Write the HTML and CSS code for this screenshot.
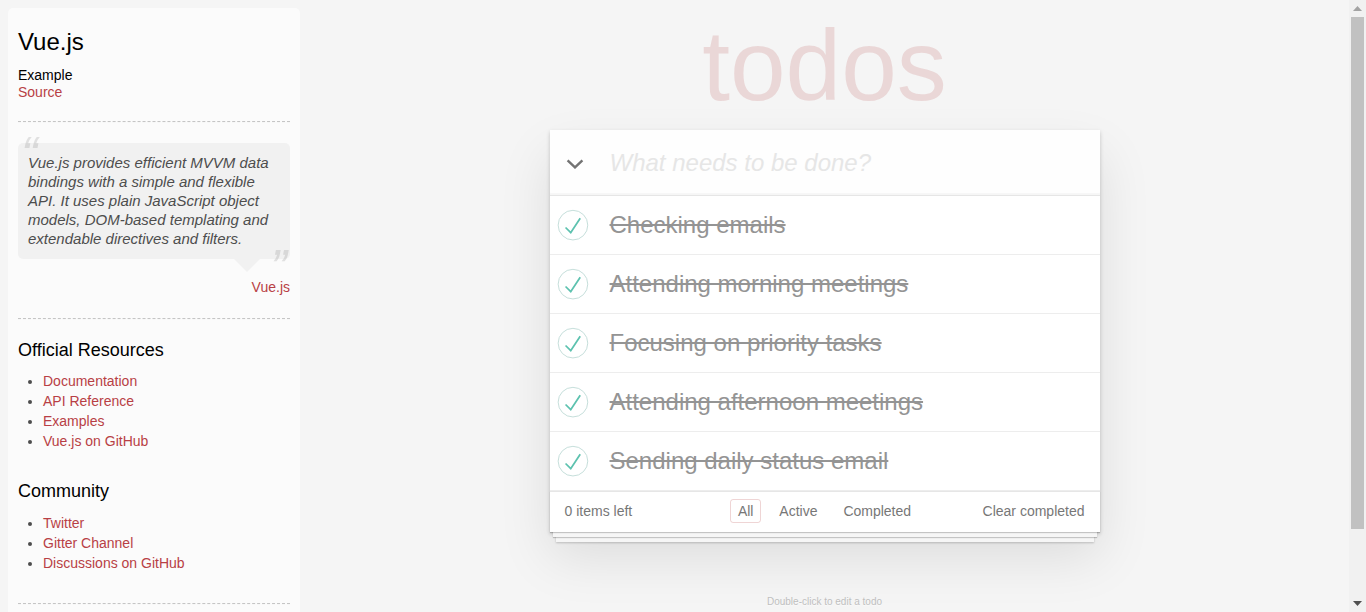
FILE: index.html
```html
<!DOCTYPE html>
<html lang="en">
<head>
<meta charset="utf-8">
<title>Vue.js • TodoMVC</title>
<link rel="stylesheet" href="styles.css">
</head>
<body>
<div class="page">
  <aside class="learn">
    <header class="learn-header">
      <h3 class="learn-title">Vue.js</h3>
      <h5 class="learn-sub">Example</h5>
      <a class="learn-link source-link" href="#">Source</a>
    </header>
    <hr class="rule">
    <blockquote class="quote">
      <div class="speech-bubble">
        <p class="quote-text">Vue.js provides efficient MVVM data bindings with a simple and flexible API. It uses plain JavaScript object models, DOM-based templating and extendable directives and filters.</p>
      </div>
      <footer class="quote-footer"><a class="learn-link" href="#">Vue.js</a></footer>
    </blockquote>
    <hr class="rule">
    <h4 class="learn-heading">Official Resources</h4>
    <ul class="learn-list">
      <li><a class="learn-link" href="#">Documentation</a></li>
      <li><a class="learn-link" href="#">API Reference</a></li>
      <li><a class="learn-link" href="#">Examples</a></li>
      <li><a class="learn-link" href="#">Vue.js on GitHub</a></li>
    </ul>
    <h4 class="learn-heading">Community</h4>
    <ul class="learn-list">
      <li><a class="learn-link" href="#">Twitter</a></li>
      <li><a class="learn-link" href="#">Gitter Channel</a></li>
      <li><a class="learn-link" href="#">Discussions on GitHub</a></li>
    </ul>
    <footer class="learn-footer">
      <hr class="rule">
      <em>If you have other helpful links to share, or find any of the links above no longer work, please <a class="learn-link" href="#">let us know</a>.</em>
    </footer>
  </aside>

  <main class="main-col">
    <h1 class="app-title">todos</h1>
    <section class="todoapp">
      <header class="app-header">
        <label class="toggle-all" for="new-todo">
          <svg class="chevron" width="18" height="10" viewBox="0 0 18 10"><path d="M1.6 1.4 L9 8.4 L16.4 1.4" fill="none" stroke="#737373" stroke-width="2.4"/></svg>
        </label>
        <input id="new-todo" class="new-todo" placeholder="What needs to be done?" autocomplete="off">
      </header>
      <ul class="todo-list">
        <li class="todo-item">
          <span class="toggle"><svg width="40" height="40" viewBox="-10 -18 100 135"><circle cx="50" cy="50" r="50" fill="none" stroke="#bddad5" stroke-width="3"/><path fill="#5dc2af" d="M72 25L42 71 27 56l-4 4 20 20 34-52z"/></svg></span>
          <label class="todo-label">Checking emails</label>
        </li>
        <li class="todo-item">
          <span class="toggle"><svg width="40" height="40" viewBox="-10 -18 100 135"><circle cx="50" cy="50" r="50" fill="none" stroke="#bddad5" stroke-width="3"/><path fill="#5dc2af" d="M72 25L42 71 27 56l-4 4 20 20 34-52z"/></svg></span>
          <label class="todo-label">Attending morning meetings</label>
        </li>
        <li class="todo-item">
          <span class="toggle"><svg width="40" height="40" viewBox="-10 -18 100 135"><circle cx="50" cy="50" r="50" fill="none" stroke="#bddad5" stroke-width="3"/><path fill="#5dc2af" d="M72 25L42 71 27 56l-4 4 20 20 34-52z"/></svg></span>
          <label class="todo-label">Focusing on priority tasks</label>
        </li>
        <li class="todo-item">
          <span class="toggle"><svg width="40" height="40" viewBox="-10 -18 100 135"><circle cx="50" cy="50" r="50" fill="none" stroke="#bddad5" stroke-width="3"/><path fill="#5dc2af" d="M72 25L42 71 27 56l-4 4 20 20 34-52z"/></svg></span>
          <label class="todo-label">Attending afternoon meetings</label>
        </li>
        <li class="todo-item">
          <span class="toggle"><svg width="40" height="40" viewBox="-10 -18 100 135"><circle cx="50" cy="50" r="50" fill="none" stroke="#bddad5" stroke-width="3"/><path fill="#5dc2af" d="M72 25L42 71 27 56l-4 4 20 20 34-52z"/></svg></span>
          <label class="todo-label">Sending daily status email</label>
        </li>
      </ul>
      <footer class="app-footer">
        <span class="todo-count"><strong>0</strong> items left</span>
        <ul class="filters">
          <li><a class="filter selected" href="#/all">All</a></li>
          <li><a class="filter" href="#/active">Active</a></li>
          <li><a class="filter" href="#/completed">Completed</a></li>
        </ul>
        <button class="clear-completed">Clear completed</button>
      </footer>
    </section>
    <footer class="info">
      <p>Double-click to edit a todo</p>
      <p>Written by <a href="#">Evan You</a></p>
      <p>Part of <a href="#">TodoMVC</a></p>
    </footer>
  </main>
</div>

<div class="scrollbar" aria-hidden="true">
  <span class="sb-button">
    <svg width="9" height="5" viewBox="0 0 9 5"><path d="M0 5 L4.5 0 L9 5z" fill="#a3a3a3"/></svg>
  </span>
  <span class="sb-track"><span class="sb-thumb"></span></span>
  <span class="sb-button">
    <svg width="9" height="5" viewBox="0 0 9 5"><path d="M0 0 L9 0 L4.5 5z" fill="#505050"/></svg>
  </span>
</div>
</body>
</html>
```

FILE: styles.css
```css
html, body {
  margin: 0;
  padding: 0;
}

body {
  font: 14px "Liberation Sans", Arial, sans-serif;
  line-height: 1.4em;
  background: #f5f5f5;
  color: #4d4d4d;
  font-weight: 300;
}

.page {
  display: flex;
  align-items: flex-start;
  margin-right: 17px;
}

/* ---------- window scrollbar (drawn, sits over the right edge) ---------- */
.scrollbar {
  position: fixed;
  top: 0;
  right: 0;
  bottom: 0;
  width: 17px;
  display: flex;
  flex-direction: column;
  background: #f1f1f1;
}

.sb-button {
  flex: 0 0 17px;
  display: flex;
  align-items: center;
  justify-content: center;
}

.sb-button svg {
  display: block;
}

.sb-track {
  flex: 1;
  display: flex;
  flex-direction: column;
  padding: 0 2px;
}

.sb-thumb {
  height: 512px;
  background: #c1c1c1;
}

/* ---------- learn sidebar ---------- */
.learn {
  flex: 0 0 272px;
  width: 272px;
  margin: 8px 0 0 8px;
  padding: 10px;
  border-radius: 5px;
  background-color: rgba(255, 255, 255, 0.6);
}

.learn-title,
.learn-sub,
.learn-heading {
  font-weight: 500;
  line-height: 1.2;
  color: #000;
}

.learn-title {
  font-size: 24px;
  margin: 10px 0;
}

.learn-sub {
  font-size: 14px;
  margin: 8px 0 0;
}

.learn-heading {
  font-size: 18px;
  margin: 10px 0;
}

.learn-link {
  font-weight: normal;
  text-decoration: none;
  color: #b83f45;
}

.source-link {
  display: block;
  line-height: 17px;
}

.rule {
  margin: 20px 0;
  border: 0;
  border-top: 1px dashed #c5c5c5;
  border-bottom: 1px dashed #f7f7f7;
}

.quote {
  margin: 20px 0;
  border: none;
}

.speech-bubble {
  position: relative;
  padding: 10px;
  background: rgba(0, 0, 0, 0.04);
  border-radius: 5px;
}

.speech-bubble::after {
  content: "";
  position: absolute;
  top: 100%;
  right: 30px;
  border: 13px solid transparent;
  border-top-color: rgba(0, 0, 0, 0.04);
}

.quote-text {
  margin: 0;
  font-size: 15px;
  font-weight: 300;
  line-height: 19.2px;
  font-style: italic;
}

.quote-text::before {
  content: "\201C";
  font-size: 50px;
  opacity: 0.15;
  position: absolute;
  top: -20px;
  left: 3px;
  line-height: 65px;
}

.quote-text::after {
  content: "\201D";
  font-size: 50px;
  opacity: 0.15;
  position: absolute;
  bottom: -42px;
  right: 3px;
  line-height: 65px;
}

.quote-footer {
  margin-top: 19.6px;
  text-align: right;
}

.learn-list {
  padding: 0;
  margin: 0 0 30px 25px;
}

.learn-list li {
  line-height: 20px;
}

.learn-footer em {
  display: block;
}

/* ---------- main column ---------- */
.main-col {
  flex: 1;
  display: flex;
  flex-direction: column;
  align-items: center;
}

.app-title {
  width: 550px;
  margin: 15px 0 15px;
  font-size: 100px;
  line-height: 100px;
  font-weight: 100;
  text-align: center;
  color: rgba(175, 47, 47, 0.15);
  text-rendering: optimizeLegibility;
}

.todoapp {
  width: 550px;
  background: #fff;
  box-shadow: 0 2px 4px 0 rgba(0, 0, 0, 0.2), 0 25px 50px 0 rgba(0, 0, 0, 0.1);
}

.app-header {
  display: flex;
  height: 65px;
  box-shadow: inset 0 -2px 1px rgba(0, 0, 0, 0.03);
  background: rgba(0, 0, 0, 0.003);
}

.toggle-all {
  flex: 0 0 60px;
  box-sizing: border-box;
  padding: 29px 0 0 16px;
}

.chevron {
  display: block;
}

.new-todo {
  flex: 1;
  min-width: 0;
  height: 65px;
  box-sizing: border-box;
  margin: 0;
  padding: 16px 16px 16px 0;
  border: 0;
  outline: none;
  background: transparent;
  font-family: inherit;
  font-size: 24px;
  font-weight: inherit;
  line-height: 1.4em;
  color: inherit;
}

.new-todo::placeholder {
  font-style: italic;
  font-weight: 300;
  color: #e6e6e6;
}

.todo-list {
  margin: 0;
  padding: 0;
  list-style: none;
  border-top: 1px solid #e6e6e6;
}

.todo-item {
  display: flex;
  align-items: center;
  font-size: 24px;
  border-bottom: 1px solid #ededed;
}

.toggle {
  flex: 0 0 40px;
  height: 40px;
}

.toggle svg {
  display: block;
}

.todo-label {
  flex: 1;
  padding: 15px 15px 15px 20px;
  line-height: 28px;
  color: #949494;
  text-decoration: line-through;
  word-break: break-all;
}

.app-footer {
  display: grid;
  grid-template-columns: 1fr auto 1fr;
  align-items: center;
  height: 20px;
  padding: 9px 15px 11px;
  color: #777;
  border-top: 1px solid #e6e6e6;
  line-height: 20px;
  box-shadow: 0 1px 1px rgba(0, 0, 0, 0.2),
    0 8px 0 -3px #f6f6f6,
    0 9px 1px -3px rgba(0, 0, 0, 0.2),
    0 16px 0 -6px #f6f6f6,
    0 17px 2px -6px rgba(0, 0, 0, 0.2);
}

.todo-count {
  justify-self: start;
}

.todo-count strong {
  font-weight: 300;
}

.filters {
  display: flex;
  gap: 3.9px;
  margin: 0;
  padding: 0;
  list-style: none;
}

.filter {
  color: inherit;
  margin: 3px;
  padding: 3px 7px;
  text-decoration: none;
  border: 1px solid transparent;
  border-radius: 3px;
}

.filter.selected {
  border-color: rgba(175, 47, 47, 0.2);
}

.clear-completed {
  justify-self: end;
  margin: 0;
  padding: 0;
  border: 0;
  background: none;
  font-family: inherit;
  font-size: 100%;
  font-weight: inherit;
  color: inherit;
  line-height: 20px;
  cursor: pointer;
}

.info {
  margin-top: 65px;
  color: #bfbfbf;
  font-size: 10px;
  text-shadow: 0 1px 0 rgba(255, 255, 255, 0.5);
  text-align: center;
}

.info p {
  margin: 0 0 10px;
  line-height: 1;
}

.info a {
  color: inherit;
  text-decoration: none;
  font-weight: 400;
}
```
